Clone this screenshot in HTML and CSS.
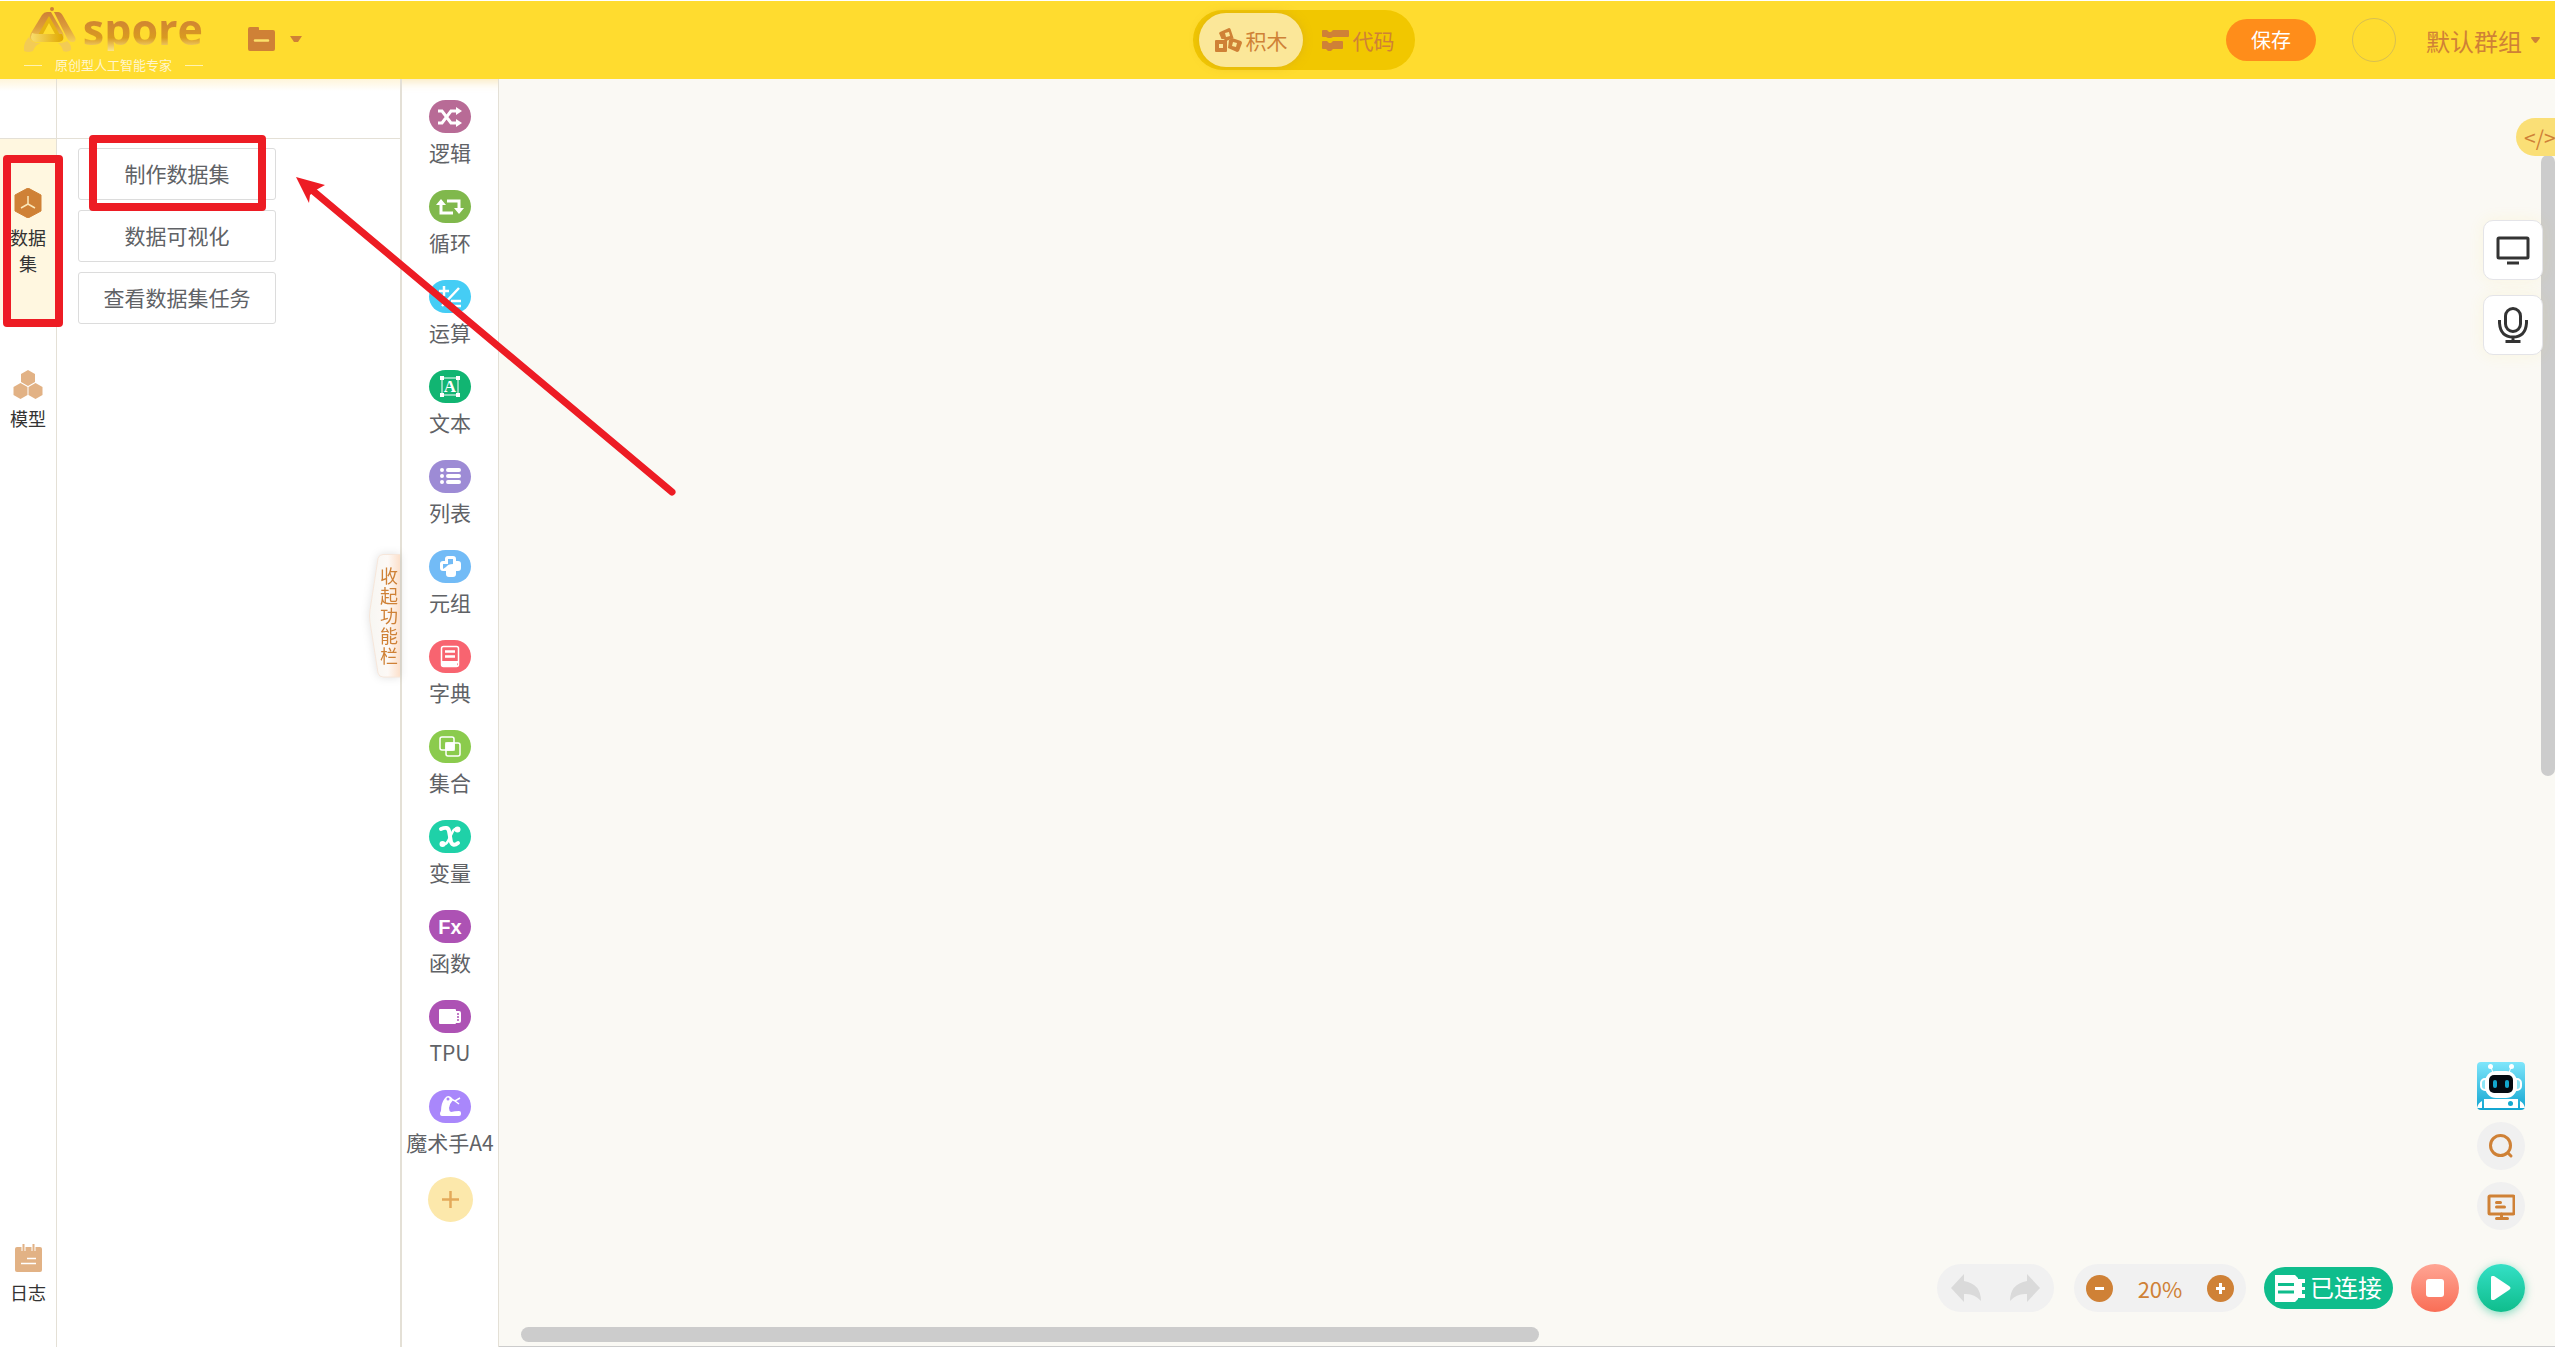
FILE: index.html
```html
<!DOCTYPE html>
<html lang="zh-CN">
<head>
  <meta charset="UTF-8" />
  <meta name="viewport" content="width=device-width, initial-scale=1.0" />
  <title>spore</title>
  <link rel="stylesheet" href="styles.css">
</head>
<body>
  <header class="header">
    <div class="header-left">
      <div class="logo">
        <div class="logo-top">
          <svg class="logo-mark" viewBox="0 0 52 46" width="52" height="46">
            <defs>
              <linearGradient id="lg" x1="0" y1="0" x2="0" y2="1">
                <stop offset="0" stop-color="#cf8136" />
                <stop offset="0.5" stop-color="#dc9c3a" />
                <stop offset="1" stop-color="#f6cf55" />
              </linearGradient>
              <linearGradient id="lg2" x1="0" y1="0" x2="1" y2="0">
                <stop offset="0" stop-color="#f8dc6c" />
                <stop offset="1" stop-color="#e0a800" />
              </linearGradient>
            </defs>
            <circle cx="28" cy="2" r="2" fill="#cf8136" />
            <path d="M18 8q2-3 5-3h4l12 21q3 9-6 9H12q-9-1-5-9z" fill="url(#lg)" />
            <path d="M25 9l11 19H14z" fill="#e6b412" />
            <path d="M8 26q3 1 6 1h24q4 8-5 8H12q-7-1-4-9z" fill="url(#lg2)" />
            <path d="M25 16l6 11H19z" fill="#ffdc2f" />
            <path d="M30 5h4q3 0 5 4l12 21q2 5-3 5-3 0-5-4z" fill="url(#lg)" />
            <path d="M5 30q1 6 12 6-6 2-8 8-5 2-9 0-1-8 5-14zM34 36q6 0 9-2 5 4 4 9-4 3-8 1-1-5-5-8z" fill="#f3cb55" />
          </svg>
          <span class="logo-name">spore</span>
        </div>
        <div class="logo-sub"><i></i><span>原创型人工智能专家</span><i></i></div>
      </div>
      <button class="file-btn" aria-label="文件">
        <svg viewBox="0 0 27 24" width="27" height="24">
          <path d="M2 0h8q1 0 1 1v2h14q2 0 2 2v17q0 2-2 2H2q-2 0-2-2V2q0-2 2-2z" fill="#cf8136" />
          <path d="M7 13.500h13" stroke="#fbe06a" stroke-width="2.500" stroke-linecap="round" />
        </svg>
        <svg viewBox="0 0 12 6" width="12" height="6"><path d="M0 0h12L8 6H4z" fill="#cf8136" /></svg>
      </button>
    </div>

    <nav class="mode">
      <button class="mode-btn active">
        <svg viewBox="0 0 27 24" width="27" height="24" fill="#cf8136" fill-rule="evenodd">
          <path d="M1 12h11v11q0 1-1 1H1q-1 0-1-1V13q0-1 1-1zm3 4v4h4v-4z" />
          <path d="M5 4l9-4q1 0 1.500 1l3 9-7 3-3-2-2 0-2.500-6zm5 1l1 4 4-1-1-4z" />
          <path d="M17 10l9 3q1 1 1 2l-3 8q-1 1-2 1l-9-4 1-8zm1 4l-1 4 4 1 1-4z" />
        </svg>
        <span>积木</span>
      </button>
      <button class="mode-btn">
        <svg viewBox="0 0 27 21" width="27" height="21" fill="#cf8136">
          <path d="M1 0h4l2 2h2l2-2h15q1 0 1 1v5q0 1-1 1H11l-2 1H6L4 7H1Q0 7 0 6V1q0-1 1-1z" />
          <path d="M1 11h4l2 2h2l2-2h9q1 0 1 1v6q0 1-1 1h-9l-2 2H6l-2-2H1q-1 0-1-1v-6q0-1 1-1z" />
        </svg>
        <span>代码</span>
      </button>
    </nav>

    <div class="header-right">
      <button class="save">保存</button>
      <span class="avatar"></span>
      <button class="group">默认群组
        <svg viewBox="0 0 9 6" width="9" height="6"><path d="M0 1q0-1 1-1h7q1 0 1 1L6 5q-1.500 2-3 0z" fill="#cf8136" /></svg>
      </button>
    </div>
  </header>

  <main class="main">
    <aside class="rail">
      <div class="strip"></div>
      <button class="tab active">
        <svg viewBox="0 0 30 30" width="30" height="30">
          <path d="M15 0l13 7v16l-13 7-13-7V7z" fill="#cf8136" stroke="#cf8136" stroke-linejoin="round" />
          <path d="M15 8v8M15 16l-7 4M15 16l7 4" stroke="#fbe7b8" stroke-width="1.500" fill="none" />
        </svg>
        <span>数据集</span>
      </button>
      <button class="tab">
        <svg viewBox="0 0 30 30" width="30" height="30" fill="#e2b285">
          <path d="M15 1l7 4v8l-7 4-7-4V5zM7.500 14l7 4v8l-7 4-7-4v-8zM22.500 14l7 4v8l-7 4-7-4v-8z" />
        </svg>
        <span>模型</span>
      </button>
      <button class="tab log">
        <svg viewBox="0 0 30 30" width="30" height="30">
          <rect x="2" y="4" width="27" height="25" rx="2" fill="#e2b285" />
          <path d="M10.500 1v7M20.500 1v7" stroke="#fff" stroke-width="4" />
          <path d="M10.500 1v7M20.500 1v7" stroke="#e2b285" stroke-width="2" />
          <path d="M14 15.500h9M8 20.500h15" stroke="#fff" stroke-width="1.500" />
        </svg>
        <span>日志</span>
      </button>
    </aside>

    <section class="panel">
      <div class="strip"></div>
      <div class="panel-list">
        <button>制作数据集</button>
        <button>数据可视化</button>
        <button>查看数据集任务</button>
      </div>
      <button class="collapse">
        <svg viewBox="0 0 31 124" preserveAspectRatio="none">
          <defs>
            <linearGradient id="fold"><stop offset="0" stop-color="#f7f6f2" /><stop offset="0.6" stop-color="#fdf9f6" /><stop offset="1" stop-color="#fce0cb" /></linearGradient>
          </defs>
          <path d="M31 .5H14q-4 0-5 4L1 56q-1 6 0 12l8 51q1 4 5 4h17" fill="url(#fold)" stroke="#f6e6da" />
        </svg>
        <span>收起功能栏</span>
      </button>
    </section>

    <nav class="toolbox">
      <div class="cats">
        <button class="cat">
          <svg class="c-logic" viewBox="0 0 42 33" fill="none" stroke="#fff" stroke-width="3">
            <path d="M9 11h4l9 12h6M9 23h4l9-12h6" /><path d="M27 7l6 4-6 4zM27 19l6 4-6 4z" fill="#fff" stroke="none" />
          </svg>
          <span>逻辑</span>
        </button>
        <button class="cat">
          <svg class="c-loop" viewBox="0 0 42 33" fill="none" stroke="#fff" stroke-width="3">
            <path d="M12 14v9h12M18 11h12v9" /><path d="M7 15l5-6 5 6zM25 18l5 6 5-6z" fill="#fff" stroke="none" />
          </svg>
          <span>循环</span>
        </button>
        <button class="cat">
          <svg class="c-math" viewBox="0 0 42 33" fill="none" stroke="#fff" stroke-width="2.500">
            <path d="M10 11h10M15 6v10M13 26L30 8M22 21h10M22 26h10" />
          </svg>
          <span>运算</span>
        </button>
        <button class="cat">
          <svg class="c-text" viewBox="0 0 42 33" fill="#fff">
            <path d="M13 8h16v17H13z" fill="none" stroke="#fff" stroke-width="1" />
            <path d="M11 6h4v4h-4zM27 6h4v4h-4zM11 23h4v4h-4zM27 23h4v4h-4z" />
            <text x="21" y="22" text-anchor="middle" class="glyph-serif">A</text>
          </svg>
          <span>文本</span>
        </button>
        <button class="cat">
          <svg class="c-list" viewBox="0 0 42 33" fill="none" stroke="#fff" stroke-width="4" stroke-linecap="round">
            <path d="M13 10h0M13 16h0M13 22h0M19 10h11M19 16h11M19 22h11" />
          </svg>
          <span>列表</span>
        </button>
        <button class="cat">
          <svg class="c-tuple" viewBox="0 0 42 33">
            <path d="M16 9q0-3 3-3h5q3 0 3 3v2h2q3 0 3 3v4q0 3-3 3h-2v3q0 3-3 3h-4q-3 0-3-3v-3h-3q-3 0-3-3v-4q0-3 3-3h2z" fill="#fff" />
            <path d="M19 9h5v5q-5 0-7 3l-3 2v-5h5z" fill="#72bbf6" />
          </svg>
          <span>元组</span>
        </button>
        <button class="cat">
          <svg class="c-dict" viewBox="0 0 42 33" fill="none" stroke="#fff">
            <rect x="12.500" y="6.500" width="17" height="20" rx="2" stroke-width="1.500" />
            <path d="M16 11.500h10M16 16.500h10" stroke-width="2.500" /><path d="M12 21h17v2q-2 1 0 3H14q-2 0-2-2z" fill="#fff" stroke="none" />
          </svg>
          <span>字典</span>
        </button>
        <button class="cat">
          <svg class="c-set" viewBox="0 0 42 33" fill="none" stroke="#fff" stroke-width="1.500">
            <rect x="11" y="7" width="14" height="13" rx="2" /><rect x="17" y="13" width="14" height="13" rx="2" />
            <rect x="17" y="13" width="8" height="7" fill="#fff" />
          </svg>
          <span>集合</span>
        </button>
        <button class="cat">
          <svg class="c-var" viewBox="0 0 42 33" fill="none" stroke="#fff" stroke-linecap="round">
            <path d="M12 9q7-3 8 2l2 11q2 5 7 1" stroke-width="4" /><path d="M29 9q-4-1-6 4l-4 8q-2 4-5 3" stroke-width="2.500" />
            <circle cx="28.500" cy="9.500" r="3" fill="#fff" stroke="none" /><circle cx="13.500" cy="24" r="3" fill="#fff" stroke="none" />
          </svg>
          <span>变量</span>
        </button>
        <button class="cat">
          <svg class="c-func" viewBox="0 0 42 33" fill="#fff"><text x="21" y="24" text-anchor="middle" class="glyph">Fx</text></svg>
          <span>函数</span>
        </button>
        <button class="cat">
          <svg class="c-func" viewBox="0 0 42 33" fill="#fff">
            <rect x="10" y="9" width="17" height="15" rx="1" />
            <path d="M26 11h4q2 0 2 2v8q0 2-2 2h-4z" /><path d="M28 14h2M28 17h2M28 20h2" stroke="#ad52b4" stroke-width="1.500" />
          </svg>
          <span>TPU</span>
        </button>
        <button class="cat">
          <svg class="c-arm" viewBox="0 0 42 33" fill="#fff">
            <path d="M11 24q0-2 1-3 0-8 4-13 3-4 7 0l1 2q-3 3-4 8 0 3 2 4 4-1 8-1 2 0 2 2v1q0 2-2 2H13q-2 0-2-2z" />
            <path d="M22 9l4 2 5-3M26 11l4 3" stroke="#fff" stroke-width="1.500" fill="none" /><circle cx="19" cy="9" r="1.500" fill="#a987fb" />
          </svg>
          <span>魔术手A4</span>
        </button>
      </div>
      <button class="add" aria-label="添加">
        <svg viewBox="0 0 17 17" width="17" height="17"><path d="M8.500 0v17M0 8.500h17" stroke="#e3a95a" stroke-width="2.500" /></svg>
      </button>
    </nav>

    <section class="canvas">
      <div class="scroll-y"></div>
      <div class="scroll-x"></div>

      <button class="code-tag">&lt;/&gt;</button>

      <div class="side-tools">
        <button aria-label="舞台">
          <svg viewBox="0 0 36 36" width="36" height="36" fill="none" stroke="#333">
            <rect x="3" y="6" width="30" height="20" rx="1" stroke-width="3" /><path d="M12 31h12" stroke-width="3" />
          </svg>
        </button>
        <button aria-label="语音">
          <svg viewBox="0 0 36 36" width="36" height="36" fill="none" stroke="#333" stroke-width="3">
            <rect x="10.500" y="1.500" width="15" height="23" rx="7.500" /><path d="M4.500 13v3q1 14 13.500 14t13.500-14v-3M18 30v4M10.500 34.500h15" />
          </svg>
        </button>
      </div>

      <div class="helpers">
        <button class="robot" aria-label="助手">
          <svg viewBox="0 0 48 48" width="48" height="48">
            <defs><linearGradient id="sky" x1="0" y1="0" x2="0" y2="1"><stop offset="0" stop-color="#7fe6fb" /><stop offset="1" stop-color="#12a5d1" /></linearGradient></defs>
            <rect width="48" height="48" rx="4" fill="url(#sky)" />
            <path d="M14 5l2 6M34 5l-2 6" stroke="#fff" stroke-width="1" />
            <circle cx="13.500" cy="4.500" r="2.500" fill="#fff" /><circle cx="34.500" cy="4.500" r="2.500" fill="#fff" />
            <rect x="4" y="17" width="40" height="11" rx="4" fill="#8ce6f8" stroke="#fff" stroke-width="2" />
            <rect x="8" y="9" width="32" height="27" rx="11" fill="#fff" />
            <rect x="12" y="13" width="24" height="18" rx="5" fill="#050b12" />
            <rect x="16" y="18" width="4" height="8" rx="2" fill="#13a8cf" /><rect x="28" y="18" width="4" height="8" rx="2" fill="#13a8cf" />
            <path d="M7 37h34v9H7zM0 46q1-5 5-7v7zM48 46q-1-5-5-7v7z" fill="#fff" />
            <circle cx="33.500" cy="41.500" r="2.500" fill="#13a8cf" />
          </svg>
        </button>
        <button class="round" aria-label="搜索">
          <svg viewBox="0 0 28 28" width="28" height="28" fill="none" stroke="#cf8136" stroke-width="3" stroke-linecap="round">
            <circle cx="13.500" cy="13.500" r="10" /><path d="M21 21l3 3" />
          </svg>
        </button>
        <button class="round" aria-label="演示">
          <svg viewBox="0 0 28 28" width="28" height="28" fill="none" stroke="#cf8136" stroke-width="3" stroke-linecap="round">
            <rect x="2" y="4" width="25" height="18" rx="1" /><path d="M9.500 10.500h4M9.500 15h8M14.500 22v4M9.500 26.500h11" />
          </svg>
        </button>
      </div>

      <div class="bottom-bar">
        <div class="pill undo">
          <button aria-label="撤销"><svg viewBox="0 0 30 28" width="30" height="28"><path d="M0 14L13 0v7q17 3 17 20-7-8-17-7v8z" fill="#dadada" /></svg></button>
          <button aria-label="重做"><svg viewBox="0 0 30 28" width="30" height="28"><path d="M30 14L17 0v7Q0 10 0 27q7-8 17-7v8z" fill="#dadada" /></svg></button>
        </div>
        <div class="pill zoom">
          <button aria-label="缩小"><svg viewBox="0 0 27 27" width="27" height="27"><circle cx="13.500" cy="13.500" r="13.500" fill="#cf8136" /><path d="M9 13.500h9" stroke="#fff" stroke-width="3" /></svg></button>
          <span>20%</span>
          <button aria-label="放大"><svg viewBox="0 0 27 27" width="27" height="27"><circle cx="13.500" cy="13.500" r="13.500" fill="#cf8136" /><path d="M9 13.500h9M13.500 8v11" stroke="#fff" stroke-width="3" /></svg></button>
        </div>
        <button class="connected">
          <svg viewBox="0 0 30 27" width="30" height="27">
            <path d="M0 0h20l3 3v1h7v4h-3v4h3v3h-3v4h3v4h-7v1l-3 3H0z" fill="#fff" />
            <path d="M3 9.500h16M3 17h16" stroke="#0fbd8c" stroke-width="3" />
          </svg>
          <span>已连接</span>
        </button>
        <button class="stop" aria-label="停止"><svg viewBox="0 0 18 18" width="18" height="18"><rect width="18" height="18" rx="3" fill="#fff" /></svg></button>
        <button class="play" aria-label="运行"><svg viewBox="0 0 20 24" width="20" height="24"><path d="M0 2q0-3 3-2l15 10q3 2 0 4L3 24q-3 1-3-2z" fill="#fff" /></svg></button>
      </div>
    </section>
  </main>

  <!-- tutorial marks: dataset tab, then the create button -->
  <div class="mark mark-tab"></div>
  <div class="mark mark-create"></div>
  <svg class="mark-arrow" viewBox="0 0 380 320" width="380" height="320">
    <path d="M16 13l360 302" stroke="#ed1c24" stroke-width="7" stroke-linecap="round" />
    <path d="M0 0l29 8-9 5-6 5-1 8z" fill="#ed1c24" />
  </svg>
</body>
</html>
```
FILE: styles.css
```css
* {
  box-sizing: border-box;
}

body {
  margin: 0;
  height: 100vh;
  display: flex;
  flex-direction: column;
  overflow: hidden;
  background: #fff;
  color: #606266;
  font-family: "Noto Sans CJK SC", "Noto Sans", sans-serif;
  font-size: 21px;
}

button {
  padding: 0;
  border: none;
  background: none;
  color: inherit;
  font: inherit;
  cursor: pointer;
}

svg {
  display: block;
  flex: none;
}

/* header */
.header {
  flex: none;
  height: 79px;
  border-top: 1px solid #fff;
  padding: 0 15px 0 24px;
  display: flex;
  align-items: center;
  justify-content: space-between;
  background: #ffdc2f;
  color: #cf8136;
  box-shadow: 0 2px 10px rgba(240, 190, 60, 0.4);
}

.header-left {
  display: flex;
  gap: 45px;
  padding-right: 80px;
}

.logo {
  width: 179px;
}

.logo-top {
  display: flex;
  justify-content: space-between;
  height: 50px;
}

.logo-name {
  height: 44px;
  font: bold 43px/44px "Open Sans", sans-serif;
  background: linear-gradient(#cf8136 25%, #d99a20 70%, #fbe48a 100%);
  background-clip: text;
  -webkit-background-clip: text;
  color: transparent;
}

.logo-sub {
  display: flex;
  align-items: center;
  justify-content: space-between;
  height: 16px;
  color: #fff6cd;
  font-size: 13px;
  line-height: 16px;
}

.logo-sub i {
  width: 18px;
  height: 1px;
  background: #fff3b0;
}

.file-btn {
  display: flex;
  align-items: center;
  gap: 15px;
  height: 64px;
}

.mode {
  display: flex;
  height: 60px;
  padding: 3px 6px;
  border-radius: 30px;
  background: #f1c700;
}

.mode-btn {
  display: flex;
  align-items: center;
  justify-content: center;
  gap: 4px;
  width: 104px;
  border-radius: 27px;
}

.mode-btn.active {
  background: #fbe799;
  box-shadow: 0 0 8px rgba(207, 160, 40, 0.5);
}

.mode-btn + .mode-btn {
  width: 106px;
  padding-left: 4px;
}

.header-right {
  display: flex;
  align-items: center;
}

.save {
  width: 90px;
  height: 42px;
  border-radius: 21px;
  background: #ff8d1a;
  color: #fff;
  font-size: 20px;
  line-height: 42px;
}

.avatar {
  width: 44px;
  height: 44px;
  margin: 0 30px 0 36px;
  border: 1px solid #d8bf50;
  border-radius: 50%;
}

.group {
  display: flex;
  align-items: center;
  gap: 9px;
  font-size: 24px;
}

/* left side */
.main {
  flex: 1;
  min-height: 0;
  display: flex;
}

.rail {
  width: 57px;
  border-right: 1px solid #e4e0d6;
  display: flex;
  flex-direction: column;
}

.strip {
  flex: none;
  height: 60px;
  border-bottom: 1px solid #e4e0d6;
  background: linear-gradient(#fff5da, #fff 12px);
}

.tab {
  display: flex;
  flex-direction: column;
  align-items: center;
  gap: 6px;
  padding: 49px 8px 44px;
  color: #333;
  font-size: 18px;
  line-height: 26px;
}

.tab.active {
  background: #fff7e0;
}

.tab.log {
  margin-top: auto;
  padding-bottom: 42px;
}

.panel {
  position: relative;
  width: 345px;
  border-right: 2px solid #e4e0d6;
}

.panel-list {
  display: flex;
  flex-direction: column;
  gap: 10px;
  width: 198px;
  margin: 9px 21px;
}

.panel-list button {
  height: 52px;
  border: 1px solid #dcdcdc;
  border-radius: 3px;
  background: #fff;
  line-height: 48px;
  padding-bottom: 2px;
}

.collapse {
  position: absolute;
  right: 0;
  top: 475px;
  width: 31px;
  height: 124px;
  padding-bottom: 2px;
  color: #cf8136;
  font-size: 18px;
  line-height: 20px;
  filter: drop-shadow(0 0 4px rgba(0, 0, 0, 0.12));
}

.collapse svg {
  position: absolute;
  inset: 0;
  width: 100%;
  height: 100%;
}

.collapse span {
  position: relative;
  display: block;
  width: 18px;
  margin-left: 11px;
}

/* block categories */
.toolbox {
  width: 97px;
  padding-top: 21px;
  border-right: 1px solid #e4e0d6;
}

.cats {
  display: flex;
  flex-direction: column;
  gap: 21px;
}

.cat {
  display: flex;
  flex-direction: column;
  align-items: center;
  gap: 4px;
  padding-bottom: 2px;
  line-height: 30px;
  white-space: nowrap;
}

.cat svg {
  width: 42px;
  height: 33px;
  border-radius: 17px;
}

.c-logic { background: #b86b96; }
.c-loop { background: #80b84c; }
.c-math { background: #45cdf5; }
.c-text { background: #11b572; }
.c-list { background: #9d8bd5; }
.c-tuple { background: #72bbf6; }
.c-dict { background: #f86470; }
.c-set { background: #8bcb4d; }
.c-var { background: #1fd1a8; }
.c-func { background: #ad52b4; }
.c-arm { background: #a987fb; }

.glyph {
  font: bold 20px "Liberation Sans", sans-serif;
}

.glyph-serif {
  font: bold 17px "Liberation Serif", serif;
}

.add {
  display: flex;
  align-items: center;
  justify-content: center;
  width: 45px;
  height: 45px;
  margin: 18px auto 0;
  border-radius: 50%;
  background: #fce8ab;
}

/* workspace */
.canvas {
  flex: 1;
  position: relative;
  background: #faf9f4;
  border-bottom: 1px solid #ccc;
}

.scroll-y,
.scroll-x {
  position: absolute;
  border-radius: 8px;
  background: #ccc;
}

.scroll-y {
  right: 0;
  top: 76px;
  width: 14px;
  height: 49%;
}

.scroll-x {
  left: 22px;
  bottom: 4px;
  width: 49.500%;
  height: 15px;
}

.code-tag {
  position: absolute;
  right: 0;
  top: 39px;
  width: 39px;
  height: 38px;
  padding-left: 8px;
  border-radius: 19px 0 0 19px;
  background: #fadf76;
  color: #cf8136;
  line-height: 36px;
  text-align: left;
  overflow: hidden;
}

.side-tools {
  position: absolute;
  right: 12px;
  top: 141px;
  display: flex;
  flex-direction: column;
  gap: 15px;
}

.side-tools button {
  display: flex;
  align-items: center;
  justify-content: center;
  width: 60px;
  height: 60px;
  border: 1px solid #e4e4e8;
  border-radius: 10px;
  background: #fff;
  box-shadow: 0 0 15px rgba(255, 220, 47, 0.1);
}

.helpers {
  position: absolute;
  right: 30px;
  bottom: 116px;
  display: flex;
  flex-direction: column;
  gap: 12px;
}

.round,
.stop,
.play {
  display: flex;
  align-items: center;
  justify-content: center;
  width: 48px;
  height: 48px;
  border-radius: 50%;
  background: #f0f0f0;
}

.bottom-bar {
  position: absolute;
  right: 30px;
  bottom: 34px;
  display: flex;
  align-items: center;
  gap: 18px;
}

.pill {
  display: flex;
  align-items: center;
  justify-content: space-between;
  height: 48px;
  border-radius: 24px;
  background: #f1f1f1;
}

.undo {
  width: 117px;
  padding: 0 14px;
  margin-right: 2px;
}

.zoom {
  width: 172px;
  padding: 0 12px;
  color: #cf8136;
  font-size: 22px;
}

.connected {
  display: flex;
  align-items: center;
  gap: 5px;
  height: 42px;
  padding: 0 11px;
  border-radius: 21px;
  background: #0fbd8c;
  color: #fff;
  font-size: 24px;
  line-height: 38px;
}

.connected span {
  padding-bottom: 2px;
}

.stop {
  background: linear-gradient(#ffa594, #f96e56);
}

.play {
  background: linear-gradient(#34e0c6, #0fbd8c);
  box-shadow: 0 2px 8px rgba(15, 189, 140, 0.5);
}

/* red tutorial marks lie over the page */
.mark {
  position: absolute;
  border: 8px solid #ed1c24;
  border-radius: 4px;
  pointer-events: none;
}

.mark-tab {
  left: 3px;
  top: 155px;
  width: 60px;
  height: 172px;
}

.mark-create {
  left: 89px;
  top: 135px;
  width: 177px;
  height: 76px;
}

.mark-arrow {
  position: absolute;
  left: 296px;
  top: 177px;
  pointer-events: none;
}
```
